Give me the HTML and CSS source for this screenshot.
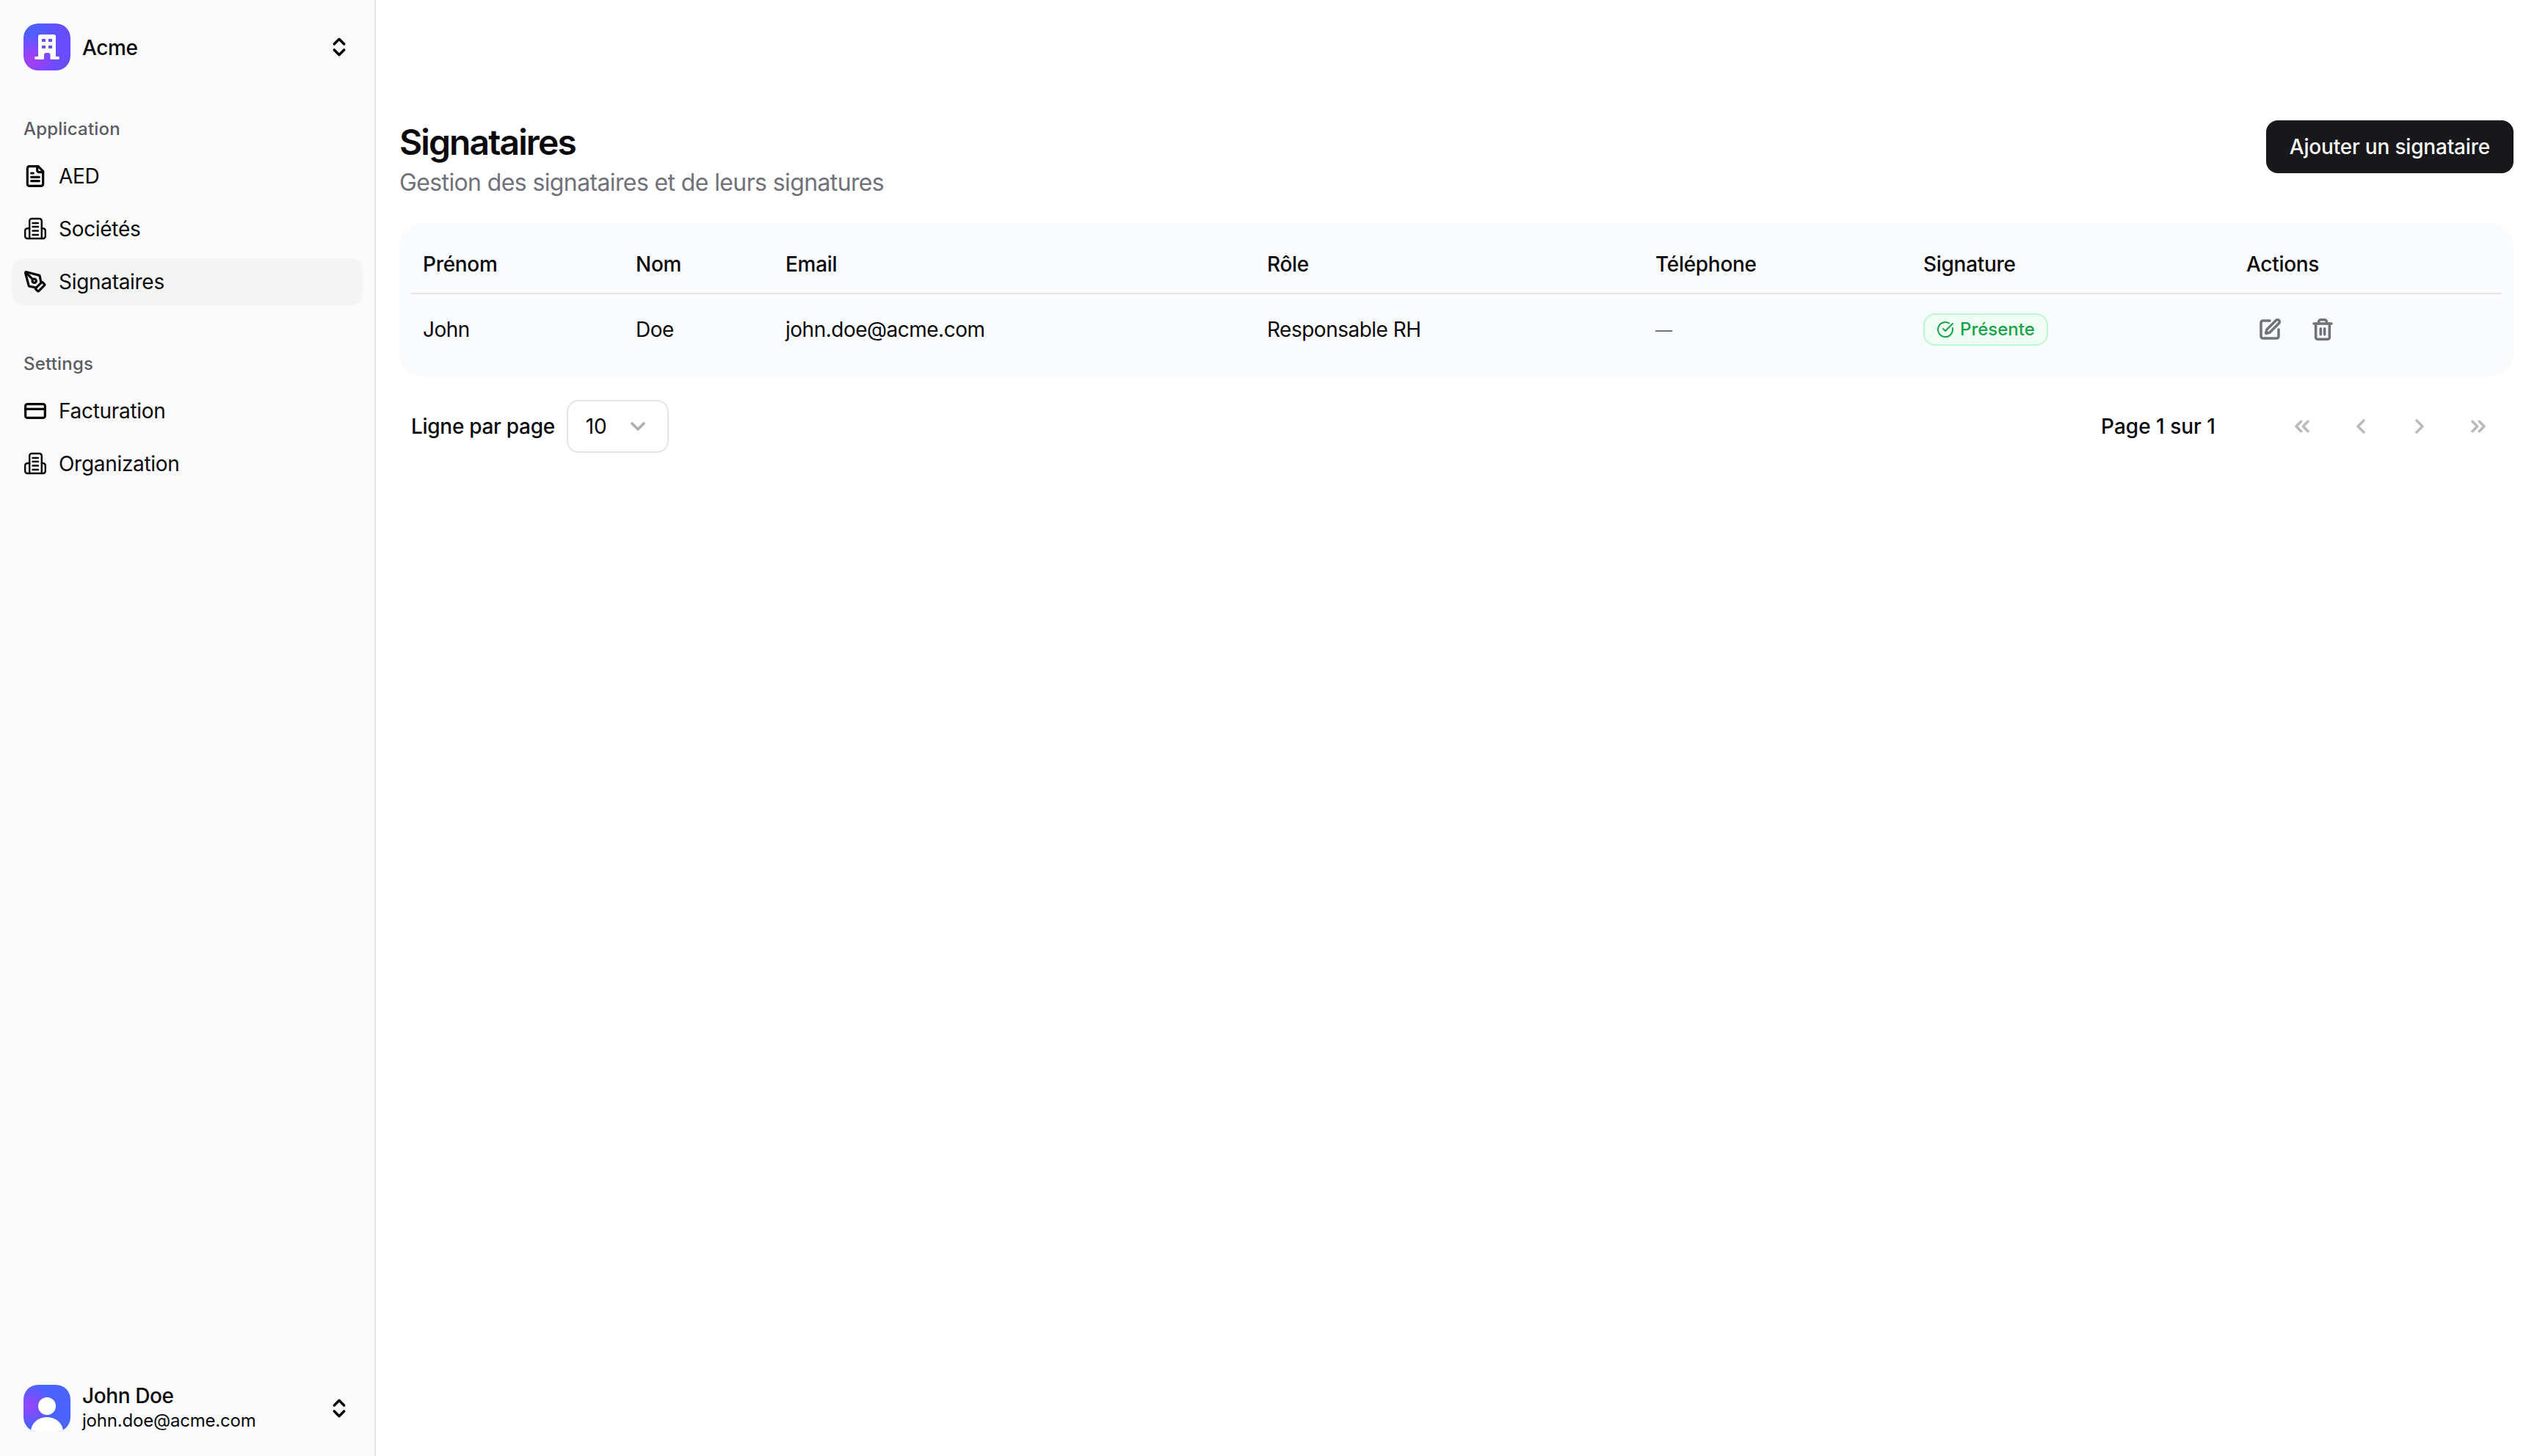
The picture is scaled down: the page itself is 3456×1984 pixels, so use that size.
FILE: index.html
```html
<!DOCTYPE html>
<html lang="fr">
<head>
<meta charset="utf-8">
<title>Signataires</title>
<link rel="stylesheet" href="styles.css">
</head>
<body>
<svg class="defs" width="0" height="0" aria-hidden="true">
  <defs>
    <symbol id="i-updown" viewBox="0 0 24 24"><path d="m7 15 5 5 5-5"/><path d="m7 9 5-5 5 5"/></symbol>
    <symbol id="i-building" viewBox="0 0 32 32"><path d="M8.200 29V5a3 3 0 0 1 3-3h10.600a3 3 0 0 1 3 3v24"/><path d="M8.200 15.200h-3a3 3 0 0 0-3 3V26a3 3 0 0 0 3 3h21.600a3 3 0 0 0 3-3v-7.800a3 3 0 0 0-3-3h-2"/><path d="M12.500 8H20M12.500 13H20M12.500 18.500H20M12.500 24H20"/></symbol>
  </defs>
</svg>
<div class="app">
  <aside class="sidebar">
    <div class="side-top">
      <div class="switcher">
        <div class="logo">
          <svg class="logo-mark" viewBox="0 0 64 64"><path fill="#fff" fill-rule="evenodd" d="M23 15h18a3 3 0 0 1 3 3V45h3a2 2 0 0 1 0 4H38a1.500 1.500 0 0 1-1.500-1.500V43a3 3 0 0 0-3-3h-2.500a3 3 0 0 0-3 3v4.500A1.500 1.500 0 0 1 26.500 49H17a2 2 0 0 1 0-4h3V18a3 3 0 0 1 3-3Zm2 6v4h5v-4Zm9 0v4h5v-4Zm-9 9v4h5v-4Zm9 0v4h5v-4Z"/></svg>
        </div>
        <span class="switcher-name">Acme</span>
        <svg class="icon icon-dark"><use href="#i-updown"/></svg>
      </div>
      <nav class="group">
        <div class="group-label">Application</div>
        <a class="nav-item">
          <svg class="icon" viewBox="0 0 24 24"><path d="M15 2H6a2 2 0 0 0-2 2v16a2 2 0 0 0 2 2h12a2 2 0 0 0 2-2V7Z"/><path d="M14 2v4a2 2 0 0 0 2 2h4"/><path d="M10 9H8"/><path d="M16 13H8"/><path d="M16 17H8"/></svg>
          <span>AED</span>
        </a>
        <a class="nav-item">
          <svg class="icon"><use href="#i-building"/></svg>
          <span>Sociétés</span>
        </a>
        <a class="nav-item nav-item-active">
          <svg class="icon" viewBox="0 0 24 24"><path d="M15.707 21.293a1 1 0 0 1-1.414 0l-1.586-1.586a1 1 0 0 1 0-1.414l5.586-5.586a1 1 0 0 1 1.414 0l1.586 1.586a1 1 0 0 1 0 1.414z"/><path d="m18 13-1.375-6.874a1 1 0 0 0-.746-.776L3.235 2.028a1 1 0 0 0-1.207 1.207L5.350 15.879a1 1 0 0 0 .776.746L13 18"/><path d="m2.300 2.300 7.286 7.286"/><circle cx="11" cy="11" r="2"/></svg>
          <span>Signataires</span>
        </a>
      </nav>
      <nav class="group">
        <div class="group-label">Settings</div>
        <a class="nav-item">
          <svg class="icon" viewBox="0 0 24 24"><rect width="20" height="14" x="2" y="5" rx="2"/><path d="M2 10h20"/></svg>
          <span>Facturation</span>
        </a>
        <a class="nav-item">
          <svg class="icon"><use href="#i-building"/></svg>
          <span>Organization</span>
        </a>
      </nav>
    </div>
    <div class="switcher">
      <div class="logo logo-user">
        <svg class="logo-mark" viewBox="0 0 64 64"><circle cx="32" cy="29" r="12" fill="#fff"/><ellipse cx="32" cy="64" rx="22" ry="20" fill="#fff"/></svg>
      </div>
      <div class="user-text">
        <div class="user-name">John Doe</div>
        <div class="user-mail">john.doe@acme.com</div>
      </div>
      <svg class="icon icon-dark"><use href="#i-updown"/></svg>
    </div>
  </aside>
  <main class="main">
    <header class="page-head">
      <div>
        <h1 class="page-title">Signataires</h1>
        <p class="page-sub">Gestion des signataires et de leurs signatures</p>
      </div>
      <button class="primary">Ajouter un signataire</button>
    </header>
    <section class="card">
      <table class="table">
        <colgroup>
          <col class="c1"><col class="c2"><col class="c3"><col class="c4"><col class="c5"><col class="c6"><col class="c7">
        </colgroup>
        <thead>
          <tr><th>Prénom</th><th>Nom</th><th>Email</th><th>Rôle</th><th>Téléphone</th><th>Signature</th><th>Actions</th></tr>
        </thead>
        <tbody>
          <tr>
            <td>John</td><td>Doe</td><td>john.doe@acme.com</td><td>Responsable RH</td><td><span class="dash">—</span></td>
            <td>
              <span class="badge">
                <svg class="badge-icon" viewBox="0 0 24 24"><path d="M21.801 10A10 10 0 1 1 17 3.335"/><path d="m9 11 3 3L22 4"/></svg>
                Présente
              </span>
            </td>
            <td>
              <div class="actions">
                <button class="icon-btn"><svg class="icon" viewBox="0 0 24 24"><path d="M12 3H5a2 2 0 0 0-2 2v14a2 2 0 0 0 2 2h14a2 2 0 0 0 2-2v-7"/><path d="M18.375 2.625a1 1 0 0 1 3 3l-9.013 9.014a2 2 0 0 1-.853.505l-2.873.84a.5.5 0 0 1-.62-.62l.84-2.873a2 2 0 0 1 .506-.852z"/></svg></button>
                <button class="icon-btn"><svg class="icon" viewBox="0 0 24 24"><path d="M3 6h18"/><path d="M19 6v14c0 1-1 2-2 2H7c-1 0-2-1-2-2V6"/><path d="M8 6V4c0-1 1-2 2-2h4c1 0 2 1 2 2v2"/><path d="M10 11v6"/><path d="M14 11v6"/></svg></button>
              </div>
            </td>
          </tr>
        </tbody>
      </table>
    </section>
    <div class="pager">
      <div class="pager-left">
        <span>Ligne par page</span>
        <div class="select">
          <span>10</span>
          <svg class="icon icon-muted" viewBox="0 0 24 24"><path d="m6 9 6 6 6-6"/></svg>
        </div>
      </div>
      <div class="pager-right">
        <span class="page-count">Page 1 sur 1</span>
        <div class="pager-btns">
          <button class="icon-btn pager-btn"><svg class="icon" viewBox="0 0 24 24"><path d="m11 17-5-5 5-5"/><path d="m18 17-5-5 5-5"/></svg></button>
          <button class="icon-btn pager-btn"><svg class="icon" viewBox="0 0 24 24"><path d="m15 18-6-6 6-6"/></svg></button>
          <button class="icon-btn pager-btn"><svg class="icon" viewBox="0 0 24 24"><path d="m9 18 6-6-6-6"/></svg></button>
          <button class="icon-btn pager-btn"><svg class="icon" viewBox="0 0 24 24"><path d="m6 17 5-5-5-5"/><path d="m13 17 5-5-5-5"/></svg></button>
        </div>
      </div>
    </div>
  </main>
</div>
</body>
</html>
```

FILE: styles.css
```css
* { box-sizing: border-box; }
html, body { margin: 0; padding: 0; height: 100%; overflow: hidden; }
body {
  font-family: Inter, "Liberation Sans", sans-serif;
  font-size: 28px;
  line-height: 40px;
  letter-spacing: -0.3px;
  color: #09090b;
  background: #fff;
}
.defs { position: absolute; }
.app { display: flex; height: 1984px; }

.sidebar {
  width: 512px;
  flex: none;
  display: flex;
  flex-direction: column;
  justify-content: space-between;
  padding: 16px;
  background: #fafafa;
  border-right: 2px solid #e4e4e7;
}
.switcher { display: flex; align-items: center; gap: 16px; padding: 16px; }
.switcher-name { flex: 1; padding-top: 1px; font-weight: 500; letter-spacing: -0.4px; }
.logo {
  width: 64px;
  height: 64px;
  flex: none;
  border-radius: 20px;
  overflow: hidden;
  background:
    radial-gradient(circle at 18% 78%, #a63ff6 0%, rgba(166, 63, 246, 0) 48%),
    radial-gradient(circle at 15% 12%, #4a62ff 0%, rgba(74, 98, 255, 0) 60%),
    #6a4cff;
}
.logo-user {
  background:
    radial-gradient(circle at 15% 45%, #9a44fa 0%, rgba(154, 68, 250, 0) 45%),
    #4a62ff;
}
.logo-mark { display: block; width: 64px; height: 64px; }
.icon {
  width: 32px;
  height: 32px;
  flex: none;
  display: block;
  fill: none;
  stroke: currentColor;
  stroke-width: 2.67px;
  stroke-linecap: round;
  stroke-linejoin: round;
}
.nav-item .icon { stroke-width: 2.4px; }
.icon-dark { color: #09090b; }
.icon-muted { color: #adadb3; }

.group { display: flex; flex-direction: column; gap: 8px; margin-top: 32px; }
.group + .group { margin-top: 48px; }
.group-label {
  height: 64px;
  margin-bottom: -8px;
  padding: 0 16px;
  display: flex;
  align-items: center;
  font-size: 24px;
  font-weight: 450;
  letter-spacing: 0.2px;
  color: #5c5c64;
}
.nav-item {
  height: 64px;
  display: flex;
  align-items: center;
  gap: 16px;
  padding: 0 16px;
  border-radius: 16px;
}
.nav-item-active { background: #f4f4f5; }
.user-text { flex: 1; min-width: 0; }
.user-name { font-weight: 500; line-height: 35px; letter-spacing: -0.4px; }
.user-mail { font-size: 24px; line-height: 32px; letter-spacing: -0.2px; }

.main { flex: 1; min-width: 0; padding: 164px 32px 0; }
.page-head { display: flex; justify-content: space-between; align-items: flex-start; height: 140px; }
.page-title {
  margin: 0;
  font-size: 48px;
  line-height: 60px;
  font-weight: 600;
  letter-spacing: -1.9px;
}
.page-sub { margin: 1px 0 0; font-size: 32px; line-height: 48px; letter-spacing: -0.62px; color: #71717a; }
.primary {
  height: 72px;
  padding: 0 32px;
  border: 0;
  border-radius: 16px;
  background: #18181b;
  color: #fafafa;
  font: 500 28px/40px Inter, "Liberation Sans", sans-serif;
  letter-spacing: -0.2px;
}

.card { padding: 16px; border-radius: 32px; background: #fafbfc; }
.table { width: 2848px; table-layout: fixed; border-collapse: collapse; }
.c1 { width: 290px; }
.c2 { width: 204px; }
.c3 { width: 656px; }
.c4 { width: 529px; }
.c5 { width: 365px; }
.c6 { width: 440px; }
.c7 { width: 364px; }
.table th {
  height: 80px;
  padding: 0 16px;
  text-align: left;
  font-weight: 500;
  border-bottom: 2px solid #e4e4e7;
}
.table td { height: 97px; padding: 0 16px; font-weight: 400; letter-spacing: -0.5px; }
.dash { font-size: 23px; color: #71717a; }

.badge {
  display: inline-flex;
  align-items: center;
  gap: 8px;
  height: 44px;
  padding: 0 16px;
  border: 2px solid #bbf7d0;
  border-radius: 16px;
  background: #f0fdf4;
  color: #16a34a;
  font-size: 24px;
  line-height: 32px;
  font-weight: 500;
  letter-spacing: 0;
  vertical-align: middle;
}
.badge-icon {
  width: 24px;
  height: 24px;
  fill: none;
  stroke: currentColor;
  stroke-width: 2px;
  stroke-linecap: round;
  stroke-linejoin: round;
}
.actions { display: flex; gap: 8px; }
.icon-btn {
  width: 64px;
  height: 64px;
  padding: 0;
  display: flex;
  align-items: center;
  justify-content: center;
  border: 0;
  background: transparent;
  color: #71717a;
}

.pager {
  display: flex;
  align-items: center;
  justify-content: space-between;
  margin-top: 32px;
  padding: 0 16px;
}
.pager-left { display: flex; align-items: center; gap: 16px; font-weight: 500; }
.select {
  width: 139px;
  height: 72px;
  padding: 0 24px;
  display: flex;
  align-items: center;
  justify-content: space-between;
  border: 2px solid #e4e4e7;
  border-radius: 16px;
  font-weight: 400;
}
.pager-right { display: flex; align-items: center; gap: 86px; }
.page-count { font-weight: 500; letter-spacing: 0; }
.pager-btns { display: flex; gap: 16px; }
.pager-btn { color: #b9b9be; }
```
